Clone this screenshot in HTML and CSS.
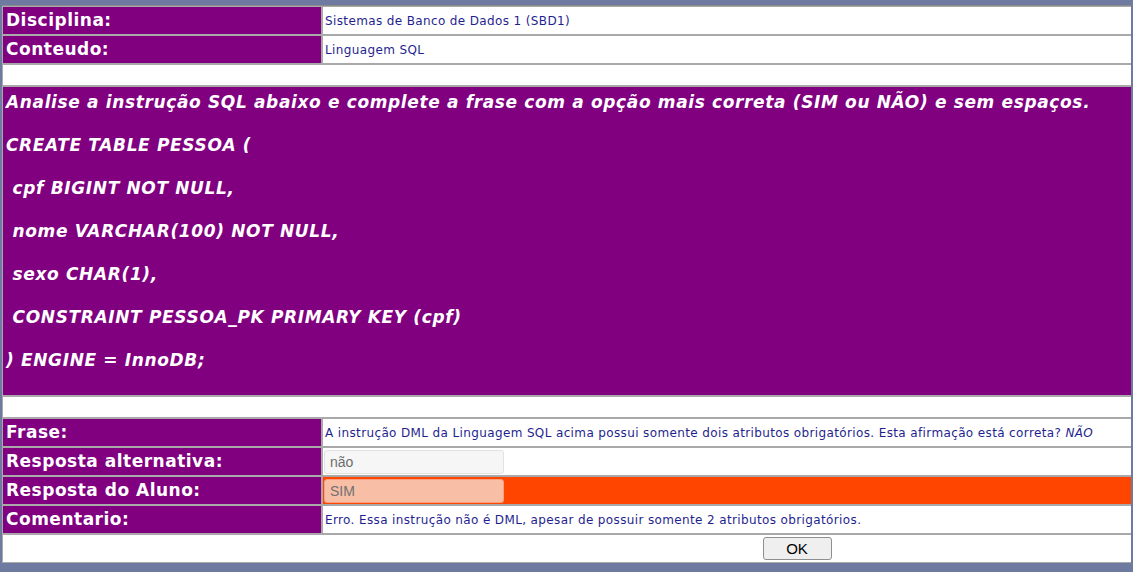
FILE: index.html
```html
<!DOCTYPE html>
<html lang="pt">
<head>
<meta charset="utf-8">
<title>Questão</title>
<link rel="stylesheet" href="styles.css">
</head>
<body>
<table class="quiz">
  <tr>
    <td class="label">Disciplina:</td>
    <td class="value">Sistemas de Banco de Dados 1 (SBD1)</td>
  </tr>
  <tr>
    <td class="label">Conteudo:</td>
    <td class="value">Linguagem SQL</td>
  </tr>
  <tr class="spacer"><td colspan="2"></td></tr>
  <tr>
    <td colspan="2" class="question">
      <p>Analise a instrução SQL abaixo e complete a frase com a opção mais correta (SIM ou NÃO) e sem espaços.</p>
      <p>CREATE TABLE PESSOA (</p>
      <p>&nbsp;cpf BIGINT NOT NULL,</p>
      <p>&nbsp;nome VARCHAR(100) NOT NULL,</p>
      <p>&nbsp;sexo CHAR(1),</p>
      <p>&nbsp;CONSTRAINT PESSOA_PK PRIMARY KEY (cpf)</p>
      <p>) ENGINE = InnoDB;</p>
    </td>
  </tr>
  <tr class="spacer"><td colspan="2"></td></tr>
  <tr>
    <td class="label">Frase:</td>
    <td class="value">A instrução DML da Linguagem SQL acima possui somente dois atributos obrigatórios. Esta afirmação está correta? <em>NÃO</em></td>
  </tr>
  <tr>
    <td class="label">Resposta alternativa:</td>
    <td class="value field"><input class="answer" type="text" value="não" readonly></td>
  </tr>
  <tr>
    <td class="label">Resposta do Aluno:</td>
    <td class="value field wrong"><input class="answer answer-wrong" type="text" value="SIM" readonly></td>
  </tr>
  <tr>
    <td class="label">Comentario:</td>
    <td class="value">Erro. Essa instrução não é DML, apesar de possuir somente 2 atributos obrigatórios.</td>
  </tr>
  <tr>
    <td colspan="2" class="actions"><button class="ok" type="button">OK</button></td>
  </tr>
</table>
</body>
</html>
```

FILE: styles.css
```css
html {
  overflow: hidden;
}

body {
  margin: 5px 2px;
  background: #6e7a9f;
  font-family: "DejaVu Sans", Verdana, sans-serif;
}

.quiz {
  width: 1590px;
  border-collapse: separate;
  border-spacing: 0;
  background: #ffffff;
  border-top: 1px solid #8c8c8c;
}

.quiz td {
  border: 1px solid #a9a9a9;
  vertical-align: middle;
}

.label {
  width: 312px;
  background: #800080;
  color: #ffffff;
  font-weight: bold;
  font-size: 17px;
  letter-spacing: 0.5px;
  line-height: 23px;
  padding: 2px 3px 2px 3px;
  white-space: nowrap;
}

.value {
  background: #ffffff;
  color: #1f1f8f;
  font-size: 12px;
  letter-spacing: 0.37px;
  line-height: 16px;
  padding: 0 2px;
}

.value em {
  font-style: italic;
}

.field {
  padding: 0 1px;
}

.wrong {
  background: #ff4500;
}

.spacer td {
  height: 20px;
  padding: 0;
}

.question {
  background: #800080;
  color: #ffffff;
  font-weight: bold;
  font-style: italic;
  font-size: 17px;
  letter-spacing: 0.64px;
  line-height: 22px;
  padding: 4px 3px 3px 3px;
}

.question p {
  margin: 0 0 21px 0;
  white-space: pre;
}

.answer {
  box-sizing: border-box;
  width: 180px;
  height: 24px;
  margin: 1px 0;
  padding: 0 5px;
  border: 1px solid #e2e2e2;
  border-radius: 3px;
  background: #f6f6f6;
  color: #6d6d6d;
  font-family: "Liberation Sans", Arial, sans-serif;
  font-size: 14px;
  letter-spacing: 0;
  display: block;
}

.answer-wrong {
  background: #f8bea6;
  border-color: #f9a17c;
  color: #707070;
}

.actions {
  text-align: center;
  height: 27px;
  padding: 0;
}

.ok {
  box-sizing: border-box;
  width: 69px;
  height: 23px;
  background: #efefef;
  border: 1px solid #8f8f8f;
  border-radius: 3px;
  color: #000000;
  font-family: "Liberation Sans", Arial, sans-serif;
  font-size: 15px;
  padding: 0;
}
```
